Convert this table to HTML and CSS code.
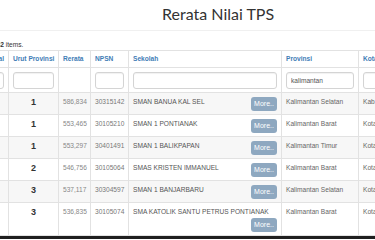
FILE: index.html
```html
<!DOCTYPE html>
<html lang="id">
<head>
<meta charset="utf-8">
<title>Rerata Nilai TPS</title>
<link rel="stylesheet" href="styles.css">
</head>
<body>
<div class="page">
  <header class="title-bar">
    <h1 class="title">Rerata Nilai TPS</h1>
  </header>
  <div class="grid-view">
    <div class="summary">Showing <b>1-20</b> of <b>42</b> items.</div>
    <table class="grid">
      <colgroup>
        <col class="c-nas"><col class="c-prov-rank"><col class="c-rerata"><col class="c-npsn"><col class="c-sekolah"><col class="c-prov"><col class="c-kota">
      </colgroup>
      <thead>
        <tr class="head-row">
          <th class="first"><a href="#">Urut Nasional</a></th>
          <th><a href="#">Urut Provinsi</a></th>
          <th><a href="#">Rerata</a></th>
          <th><a href="#">NPSN</a></th>
          <th><a href="#">Sekolah</a></th>
          <th><a href="#">Provinsi</a></th>
          <th><a href="#">Kota</a></th>
        </tr>
        <tr class="filter-row">
          <td><input class="filter" type="text"></td>
          <td><input class="filter" type="text"></td>
          <td></td>
          <td><input class="filter" type="text"></td>
          <td><input class="filter" type="text"></td>
          <td><input class="filter" type="text" value="kalimantan"></td>
          <td><input class="filter" type="text"></td>
        </tr>
      </thead>
      <tbody>
        <tr>
          <td></td><td class="rank">1</td><td class="num">586,834</td><td class="npsn">30315142</td>
          <td><div class="school"><span class="name">SMAN BANUA KAL SEL</span><a class="more" href="#">More..</a></div></td>
          <td class="prov">Kalimantan Selatan</td><td class="kota">Kab.</td>
        </tr>
        <tr>
          <td></td><td class="rank">1</td><td class="num">553,465</td><td class="npsn">30105210</td>
          <td><div class="school"><span class="name">SMAN 1 PONTIANAK</span><a class="more" href="#">More..</a></div></td>
          <td class="prov">Kalimantan Barat</td><td class="kota">Kota</td>
        </tr>
        <tr>
          <td></td><td class="rank">1</td><td class="num">553,297</td><td class="npsn">30401491</td>
          <td><div class="school"><span class="name">SMAN 1 BALIKPAPAN</span><a class="more" href="#">More..</a></div></td>
          <td class="prov">Kalimantan Timur</td><td class="kota">Kota</td>
        </tr>
        <tr>
          <td></td><td class="rank">2</td><td class="num">546,756</td><td class="npsn">30105064</td>
          <td><div class="school"><span class="name">SMAS KRISTEN IMMANUEL</span><a class="more" href="#">More..</a></div></td>
          <td class="prov">Kalimantan Barat</td><td class="kota">Kota</td>
        </tr>
        <tr>
          <td></td><td class="rank">3</td><td class="num">537,117</td><td class="npsn">30304597</td>
          <td><div class="school"><span class="name">SMAN 1 BANJARBARU</span><a class="more" href="#">More..</a></div></td>
          <td class="prov">Kalimantan Selatan</td><td class="kota">Kota</td>
        </tr>
        <tr>
          <td></td><td class="rank">3</td><td class="num">536,835</td><td class="npsn">30105074</td>
          <td><div class="school"><span class="name">SMA KATOLIK SANTU PETRUS PONTIANAK</span><a class="more" href="#">More..</a></div></td>
          <td class="prov">Kalimantan Barat</td><td class="kota">Kota</td>
        </tr>
      </tbody>
    </table>
  </div>
  <div class="bottom-bar"></div>
</div>
</body>
</html>
```

FILE: styles.css
```css
html, body {
  margin: 0;
  padding: 0;
  background: #ffffff;
  overflow: hidden;
}

.page {
  width: 375px;
  height: 240px;
  overflow: hidden;
  font-family: "Liberation Sans", Arial, sans-serif;
  color: #555;
}

.title-bar {
  height: 31px;
  border-bottom: 1px solid #f0f0f0;
  box-sizing: border-box;
  padding-left: 162px;
  padding-top: 4px;
}

.title {
  margin: 0;
  font-family: Lato, "Open Sans", sans-serif;
  font-weight: 400;
  font-size: 16px;
  line-height: 20px;
  color: #333;
  white-space: nowrap;
}

.grid-view {
  margin-left: -53px;
  margin-top: 9px;
}

.summary {
  font-size: 6.6px;
  line-height: 10px;
  color: #333;
  white-space: nowrap;
}

.grid {
  border-collapse: collapse;
  table-layout: fixed;
  width: 491px;
  font-size: 6.6px;
}

.c-nas { width: 61px; }
.c-prov-rank { width: 50px; }
.c-rerata { width: 32px; }
.c-npsn { width: 38px; }
.c-sekolah { width: 153px; }
.c-prov { width: 77px; }
.c-kota { width: 80px; }

.grid th,
.grid td {
  border: 1px solid #e2e2e2;
  text-align: left;
  vertical-align: top;
  white-space: nowrap;
  overflow: hidden;
}

.head-row th {
  padding: 3px 4px;
  line-height: 10px;
  font-weight: bold;
}

.grid .head-row th.first {
  text-align: right;
}

.head-row a {
  color: #3f7db6;
  text-decoration: none;
}

.filter-row td {
  padding: 4px 4px 3px;
  height: 17px;
}

.filter {
  display: block;
  box-sizing: border-box;
  width: 100%;
  height: 17px;
  margin: 0;
  padding: 0 4px;
  border: 1px solid #d4d4d4;
  border-radius: 3px;
  box-shadow: inset 0 1px 1px rgba(0, 0, 0, 0.06);
  font-family: "Liberation Sans", Arial, sans-serif;
  font-size: 6.6px;
  color: #555;
  background: #fff;
}

tbody td {
  padding: 4px 4px 3px;
  line-height: 10px;
}

tbody tr:nth-child(odd) {
  background: #f7f7f7;
}

.grid td.rank {
  text-align: center;
  font-weight: bold;
  font-size: 9px;
  line-height: 10px;
  color: #333;
}

.num {
  color: #888;
}

.npsn {
  color: #777;
}

.prov,
.kota {
  color: #666;
}

.school {
  display: flex;
  flex-wrap: wrap;
  align-items: flex-start;
  row-gap: 1px;
  white-space: nowrap;
}

.name {
  color: #555;
  line-height: 10px;
}

.more {
  margin-left: auto;
  width: 26px;
  height: 14px;
  box-sizing: border-box;
  border-radius: 3px;
  background: #8ea8c0;
  color: #fff;
  font-size: 7px;
  line-height: 14px;
  text-align: center;
  text-decoration: none;
}

.bottom-bar {
  height: 3px;
  background: #1f1f1f;
}
```
